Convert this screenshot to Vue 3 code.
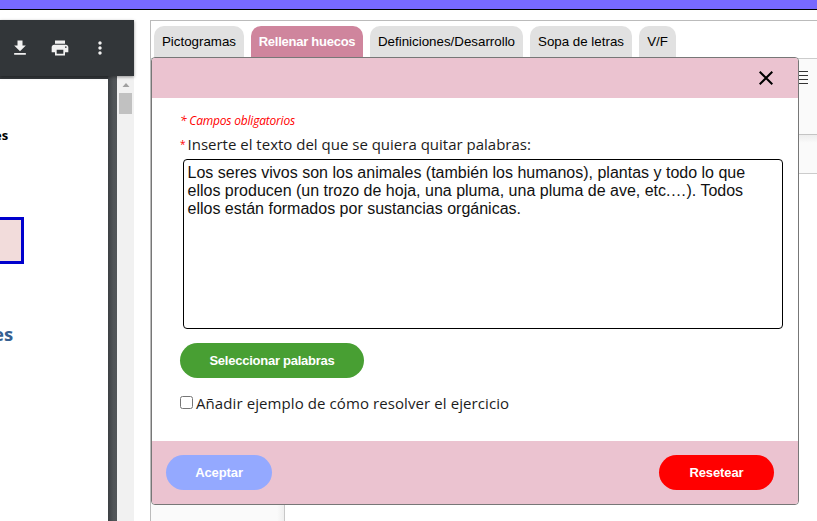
<script setup>
import { ref } from 'vue'

const tabs = [
  { name: 'Pictogramas', width: 90 },
  { name: 'Rellenar huecos', width: 112 },
  { name: 'Definiciones/Desarrollo', width: 153 },
  { name: 'Sopa de letras', width: 102 },
  { name: 'V/F', width: 37 },
]
const active = ref('Rellenar huecos')
const example = ref(false)
const text = ref(
  'Los seres vivos son los animales (también los humanos), plantas y todo lo que ellos producen (un trozo de hoja, una pluma, una pluma de ave, etc.…). Todos ellos están formados por sustancias orgánicas.'
)
</script>

<template>
  <div class="screen">
    <header class="topbar"></header>
    <main class="columns">
      <section class="viewer">
        <div class="toolbar">
          <svg class="tool" viewBox="0 0 24 24"><path d="M19 9h-4V3H9v6H5l7 7 7-7zM5 18v2h14v-2H5z" /></svg>
          <svg class="tool" viewBox="0 0 24 24"><path d="M19 8H5c-1.66 0-3 1.34-3 3v6h4v4h12v-4h4v-6c0-1.66-1.34-3-3-3zm-3 11H8v-5h8v5zm3-7c-.55 0-1-.45-1-1s.45-1 1-1 1 .45 1 1-.45 1-1 1zm-1-9H6v4h12V3z" /></svg>
          <svg class="tool" viewBox="0 0 24 24"><path d="M12 8c1.1 0 2-.9 2-2s-.9-2-2-2-2 .9-2 2 .9 2 2 2zm0 2c-1.1 0-2 .9-2 2s.9 2 2 2 2-.9 2-2-.9-2-2-2zm0 6c-1.1 0-2 .9-2 2s.9 2 2 2 2-.9 2-2-.9-2-2-2z" /></svg>
        </div>
        <div class="document">
          <div class="page">
            <div class="word">es</div>
            <div class="box"></div>
            <div class="heading">es</div>
          </div>
          <div class="gutter"></div>
          <div class="scrollbar">
            <svg class="arrow" viewBox="0 0 7 4"><path d="M0 4L3.5 0L7 4z" /></svg>
            <div class="thumb"></div>
          </div>
        </div>
      </section>

      <section class="panel">
        <nav class="tabs">
          <button
            v-for="tab in tabs"
            :key="tab.name"
            class="tab"
            :class="{ active: tab.name === active }"
            :style="{ width: tab.width + 'px' }"
            @click="active = tab.name"
          >{{ tab.name }}</button>
        </nav>
        <div class="editor">
          <div class="editor-tools">
            <svg class="lines" viewBox="0 0 14 14"><path d="M0 .5h14M0 4.5h14M0 8.5h14M0 12.5h14" /></svg>
          </div>
          <div class="editor-sub"></div>
          <div class="editor-body"><div class="editor-side"></div></div>
        </div>

        <div class="dialog">
          <div class="dialog-head">
            <svg class="close" viewBox="0 0 14 14"><path d="M.7.7l12.6 12.6M13.3.7L.7 13.3" /></svg>
          </div>
          <div class="dialog-body">
            <p class="required">* Campos obligatorios</p>
            <label class="label"><span class="star">*</span><span>Inserte el texto del que se quiera quitar palabras:</span></label>
            <textarea v-model="text" class="area" spellcheck="false"></textarea>
            <button class="pill green">Seleccionar palabras</button>
            <label class="check"><input v-model="example" type="checkbox"><span>Añadir ejemplo de cómo resolver el ejercicio</span></label>
          </div>
          <div class="dialog-foot">
            <button class="pill blue">Aceptar</button>
            <button class="pill red">Resetear</button>
          </div>
        </div>
      </section>
    </main>
  </div>
</template>

<style>
body { background: #fff; overflow: hidden; }
</style>

<style scoped>
* { box-sizing: border-box; }
.screen { width: 817px; height: 521px; overflow: hidden; display: flex; flex-direction: column; font-family: "Liberation Sans", Arial, sans-serif; }
.topbar { height: 10px; flex: none; background: #7869ff; border-bottom: 1px solid #000; }
.columns { flex: 1; min-height: 0; display: flex; gap: 16px; padding-top: 10px; }
.viewer { width: 134px; flex: none; display: flex; flex-direction: column; }
.toolbar { height: 56px; flex: none; background: #323639; display: flex; align-items: center; gap: 20px; padding-left: 10px; position: relative; box-shadow: 0 1px 3px rgba(0, 0, 0, .4); }
.tool { width: 20px; height: 20px; fill: #f1f1f1; }
.document { flex: 1; display: flex; background: #525659; }
.page { width: 108px; background: #fff; border-top: 3px solid #34383b; font-family: "Open Sans", sans-serif; font-weight: 700; }
.word { height: 20px; margin-top: 46px; margin-left: -6px; font-size: 13px; line-height: 20px; color: #000; }
.box { width: 24px; height: 47px; margin-top: 72px; border: 3px solid #0000cd; border-left: 0; background: #f2dcdb; }
.heading { margin-top: 56px; margin-left: -7px; font-size: 18.5px; line-height: 28px; color: #365f91; }
.gutter { width: 9px; background: linear-gradient(90deg, #3c4043, #505457 60%, #525659); }
.scrollbar { width: 17px; background: #f1f1f1; display: flex; flex-direction: column; align-items: center; padding-top: 7px; }
.arrow { width: 8px; height: 4px; fill: #a0a0a0; }
.thumb { width: 13px; height: 21px; margin-top: 6px; background: #c1c1c1; }

.panel { flex: 1; min-width: 0; position: relative; border: 1px solid #bbb; border-width: 1px 0 0 1px; display: flex; flex-direction: column; }
.tabs { height: 37px; flex: none; padding: 5px 0 0 3px; display: flex; gap: 7px; }
.tab { height: 32px; flex: none; padding: 0 0 2px; border: 0; border-radius: 10px 10px 0 0; background: #e1e1e1; color: #000; font: 13.333px "Liberation Sans", Arial, sans-serif; white-space: nowrap; }
.tab.active { background: #cf859d; color: #fff; font-weight: 700; font-size: 13px; letter-spacing: -.25px; }
.editor { flex: 1; display: flex; flex-direction: column; border-top: 1px solid #ccc; }
.editor-tools { height: 76px; background: #fafafa; border-bottom: 1px solid #c4c4c4; padding: 12px 9px 0; display: flex; justify-content: flex-end; }
.lines { width: 14px; height: 14px; stroke: #333; fill: none; }
.editor-sub { height: 39px; background: linear-gradient(#ededed, #fafafa 8px); border-bottom: 1px solid #ccc; }
.editor-body { flex: 1; display: flex; }
.editor-side { width: 134px; background: linear-gradient(90deg, #fafafa 126px, #efefef); border-right: 1px solid #c8c8c8; }

.dialog { position: absolute; left: 0; top: 36px; width: 648px; height: 448px; border: 1px solid #777; border-radius: 4px; background: #fff; overflow: hidden; display: flex; flex-direction: column; }
.dialog-head { height: 40px; flex: none; background: #ebc3d0; display: flex; align-items: center; justify-content: flex-end; padding-right: 25px; }
.close { width: 14px; height: 14px; stroke: #000; stroke-width: 2; fill: none; }
.dialog-body { flex: 1; padding: 14px 28px 0; display: flex; flex-direction: column; align-items: flex-start; font-family: "Open Sans", "Noto Sans", sans-serif; color: #1c1c1c; }
.required { margin: 0; height: 18px; font-size: 12px; line-height: 18px; letter-spacing: -.2px; font-style: italic; color: #f00; white-space: nowrap; }
.label { height: 23px; margin-top: 3px; display: flex; font-size: 15px; line-height: 23px; white-space: nowrap; }
.star { width: 7.5px; font-size: 10px; color: #f00; }
.area { width: 600px; height: 170px; flex: none; margin: 3px 0 0 3px; padding: 4px 4px 4px 3.5px; border: 1px solid #000; border-radius: 4px; resize: none; outline: 0; font: 16px/18px "Liberation Sans", Arial, sans-serif; color: #111; background: #fff; overflow: hidden; }
.pill { height: 35px; padding: 0; border: 0; border-radius: 18px; color: #fff; font: 700 13px "Liberation Sans", Arial, sans-serif; letter-spacing: -.1px; white-space: nowrap; }
.green { width: 184px; margin-top: 14px; flex: none; background: #489f33; letter-spacing: -.25px; }
.check { height: 24px; margin-top: 13px; display: flex; align-items: center; gap: 3px; font-size: 15px; line-height: 24px; letter-spacing: .09px; white-space: nowrap; }
.check input { width: 13px; height: 13px; margin: -2px 0 0; }
.dialog-foot { height: 63px; flex: none; background: #ebc3d0; display: flex; justify-content: space-between; padding: 14px 24px 0 14px; }
.blue { width: 106px; background: #94a9ff; }
.red { width: 115px; background: #f00; }
</style>
